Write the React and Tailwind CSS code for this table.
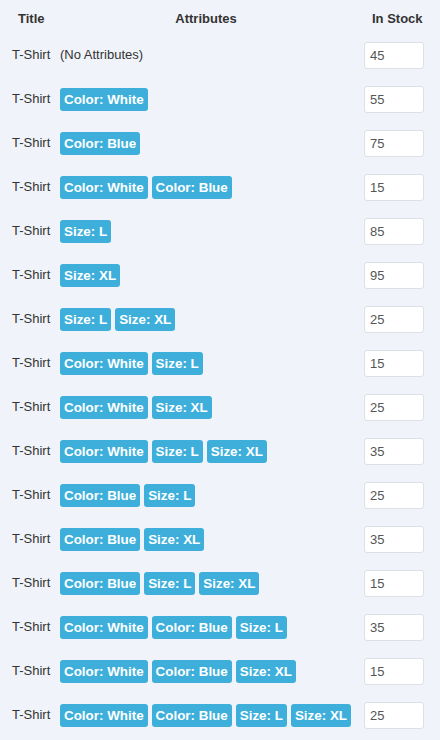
import React from 'react';

const rows = [
  { attrs: [], stock: 45 },
  { attrs: ['Color: White'], stock: 55 },
  { attrs: ['Color: Blue'], stock: 75 },
  { attrs: ['Color: White', 'Color: Blue'], stock: 15 },
  { attrs: ['Size: L'], stock: 85 },
  { attrs: ['Size: XL'], stock: 95 },
  { attrs: ['Size: L', 'Size: XL'], stock: 25 },
  { attrs: ['Color: White', 'Size: L'], stock: 15 },
  { attrs: ['Color: White', 'Size: XL'], stock: 25 },
  { attrs: ['Color: White', 'Size: L', 'Size: XL'], stock: 35 },
  { attrs: ['Color: Blue', 'Size: L'], stock: 25 },
  { attrs: ['Color: Blue', 'Size: XL'], stock: 35 },
  { attrs: ['Color: Blue', 'Size: L', 'Size: XL'], stock: 15 },
  { attrs: ['Color: White', 'Color: Blue', 'Size: L'], stock: 35 },
  { attrs: ['Color: White', 'Color: Blue', 'Size: XL'], stock: 15 },
  { attrs: ['Color: White', 'Color: Blue', 'Size: L', 'Size: XL'], stock: 25 },
];

const App = () => {
  return (
    <div
      className="min-h-[740px] w-[440px] bg-[#f0f3f9] text-[13px] text-[#333]"
      style={{ fontFamily: '"Liberation Sans", Arial, sans-serif' }}
    >
      {/* Header */}
      <div className="flex h-[33px] pl-3 pt-[11px] font-bold leading-4">
        <div className="w-[48px] pl-[6px]">Title</div>
        <div className="w-[292px] text-center">Attributes</div>
        <div className="ml-3 w-[60px] pl-2 whitespace-nowrap">In Stock</div>
      </div>

      {/* Rows */}
      {rows.map((row, i) => (
        <div key={i} className="flex h-[44px] items-center pl-3">
          <div className="w-[48px] whitespace-nowrap">T-Shirt</div>
          <div className="flex w-[292px] gap-1">
            {row.attrs.length === 0 ? (
              <span>(No Attributes)</span>
            ) : (
              row.attrs.map((a) => (
                <span
                  key={a}
                  className="h-[23px] rounded-[3px] bg-[#3eafdb] px-1 text-[13.4px] font-bold leading-[23px] text-white whitespace-nowrap"
                >
                  {a}
                </span>
              ))
            )}
          </div>
          <input
            readOnly
            value={row.stock}
            className="ml-3 h-[27px] w-[60px] rounded-[3px] border border-[#dcdfe4] bg-white px-[5px] text-[13px] text-[#555] outline-none"
          />
        </div>
      ))}
    </div>
  );
};

export default App;
